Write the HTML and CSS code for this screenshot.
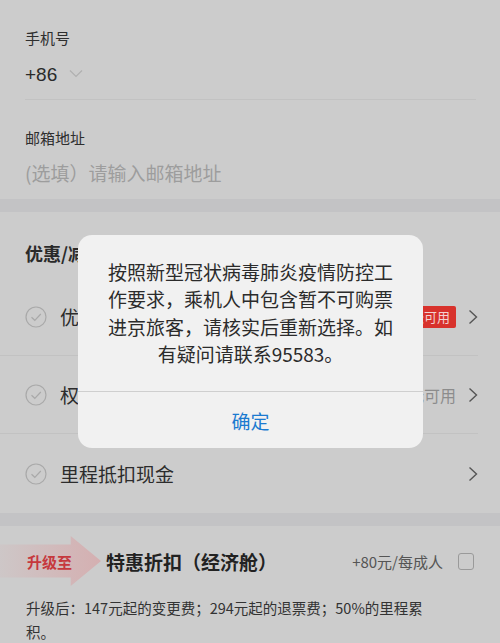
FILE: index.html
```html
<!DOCTYPE html>
<html lang="zh">
<head>
<meta charset="utf-8">
<link rel="stylesheet" href="styles.css">
</head>
<body>
<div class="page">
  <section class="card contact">
    <div class="field first">
      <div class="label">手机号</div>
      <div class="value">+86
        <svg class="down" width="14" height="9" viewBox="0 0 14 9"><polyline points="1,1.5 7,7.5 13,1.5" fill="none" stroke="#b0b0b0" stroke-width="1.2"/></svg>
      </div>
    </div>
    <div class="field second">
      <div class="label">邮箱地址</div>
      <div class="value placeholder">(选填）请输入邮箱地址</div>
    </div>
  </section>
  <div class="strip"></div>
  <section class="card offers">
    <h2 class="title">优惠/减免</h2>
    <div class="row">
      <svg class="check" width="22" height="22" viewBox="0 0 22 22"><circle cx="11" cy="11" r="10" fill="none" stroke="#a9a9a9" stroke-width="1.2"/><polyline points="6.5,11.2 9.8,14.3 15.8,8" fill="none" stroke="#a9a9a9" stroke-width="1.2"/></svg>
      <span class="name">优惠券</span>
      <span class="badge">2张可用</span>
      <svg class="chev" width="10" height="16" viewBox="0 0 10 16"><polyline points="1.5,1.5 8.5,8 1.5,14.5" fill="none" stroke="#555" stroke-width="1.4"/></svg>
    </div>
    <div class="row">
      <svg class="check" width="22" height="22" viewBox="0 0 22 22"><circle cx="11" cy="11" r="10" fill="none" stroke="#a9a9a9" stroke-width="1.2"/><polyline points="6.5,11.2 9.8,14.3 15.8,8" fill="none" stroke="#a9a9a9" stroke-width="1.2"/></svg>
      <span class="name">权益券</span>
      <span class="muted">暂无可用</span>
      <svg class="chev" width="10" height="16" viewBox="0 0 10 16"><polyline points="1.5,1.5 8.5,8 1.5,14.5" fill="none" stroke="#555" stroke-width="1.4"/></svg>
    </div>
    <div class="row last">
      <svg class="check" width="22" height="22" viewBox="0 0 22 22"><circle cx="11" cy="11" r="10" fill="none" stroke="#a9a9a9" stroke-width="1.2"/><polyline points="6.5,11.2 9.8,14.3 15.8,8" fill="none" stroke="#a9a9a9" stroke-width="1.2"/></svg>
      <span class="name">里程抵扣现金</span>
      <span class="spacer"></span>
      <svg class="chev" width="10" height="16" viewBox="0 0 10 16"><polyline points="1.5,1.5 8.5,8 1.5,14.5" fill="none" stroke="#555" stroke-width="1.4"/></svg>
    </div>
  </section>
  <div class="strip"></div>
  <section class="card upgrade">
    <div class="up-row">
      <div class="tag"><span class="arrow"></span><span class="tag-text">升级至</span></div>
      <span class="cabin">特惠折扣（经济舱）</span>
      <span class="price">+80元/每成人</span>
      <span class="box"></span>
    </div>
    <p class="desc">升级后：147元起的变更费；294元起的退票费；50%的里程累<br>积。</p>
  </section>

  <div class="alert">
    <div class="alert-msg">按照新型冠状病毒肺炎疫情防控工<br>作要求，乘机人中包含暂不可购票<br>进京旅客，请核实后重新选择。如<br>有疑问请联系95583。</div>
    <div class="alert-btn">确定</div>
  </div>
</div>
</body>
</html>
```

FILE: styles.css
```css
* { box-sizing: border-box; }
html, body {
  margin: 0;
  padding: 0;
  background: #cccccc;
  font-family: "Noto Sans CJK SC", "Noto Sans", sans-serif;
  color: #2c2c2c;
}
.page {
  position: relative;
  width: 500px;
  height: 643px;
  overflow: hidden;
}
.card { background: #cccccc; }
.strip { height: 13px; background: #c3c3c5; }

.contact { padding-left: 25px; padding-right: 24px; }
.field { display: flex; flex-direction: column; }
.field.first {
  height: 100px;
  padding-top: 28px;
  border-bottom: 1px solid #c2c2c2;
}
.field.second { height: 99px; padding-top: 28px; }
.label { font-size: 15px; line-height: 20px; color: #2e2e2e; }
.value {
  display: flex;
  align-items: center;
  gap: 12px;
  font-size: 19px;
  line-height: 30px;
  margin-top: 12px;
  color: #2a2a2a;
  font-family: "Liberation Sans", "Noto Sans CJK SC", sans-serif;
}
.second .value { margin-top: 10px; }
.value .down { margin-top: -4px; }
.placeholder { color: #9d9d9d; font-family: "Noto Sans CJK SC", sans-serif; }

.title {
  margin: 0;
  padding: 29px 0 13px 25px;
  font-size: 18px;
  line-height: 24px;
  font-weight: 700;
  color: #2a2a2a;
}
.row {
  display: flex;
  align-items: center;
  height: 78px;
  margin-right: 22px;
  padding-left: 25px;
  border-bottom: 1px solid #c2c2c2;
}
.row.last { border-bottom: none; height: 79px; }
.check { flex: none; }
.name { margin-left: 13px; font-size: 19px; color: #2c2c2c; flex: 1; }
.spacer { flex: 1; }
.badge {
  background: #d8322c;
  color: #f3d3d1;
  font-size: 13px;
  line-height: 22px;
  padding: 0 6px;
  border-radius: 2px;
}
.muted { color: #8c8c8c; font-size: 16px; }
.chev { margin-left: 12px; flex: none; }

.upgrade { padding-bottom: 10px; }
.up-row {
  display: flex;
  align-items: center;
  height: 70px;
  padding-right: 26px;
}
.tag {
  position: relative;
  width: 106px;
  height: 70px;
  display: flex;
  align-items: center;
  flex: none;
}
.arrow {
  position: absolute;
  left: 0;
  top: 10px;
  width: 101px;
  height: 50px;
  background: linear-gradient(90deg, rgba(214,170,172,0.15), rgba(214,170,172,0.85));
  clip-path: polygon(0 17%, 70% 17%, 70% 0, 100% 50%, 70% 100%, 70% 83%, 0 83%);
}
.tag-text {
  position: relative;
  margin-left: 27px;
  font-size: 15px;
  font-weight: 700;
  color: #c6383d;
}
.cabin { font-size: 19px; font-weight: 700; color: #222; flex: 1; }
.price { font-size: 15px; color: #555; }
.box {
  width: 16px;
  height: 17px;
  margin-left: 15px;
  border: 1.3px solid #9a9a9a;
  border-radius: 3px;
}
.desc {
  margin: 0 0 0 26px;
  font-size: 14.5px;
  line-height: 24px;
  color: #333;
}

.alert {
  position: absolute;
  left: 78px;
  top: 235px;
  width: 345px;
  height: 213px;
  background: #f1f1f1;
  border-radius: 14px;
  display: flex;
  flex-direction: column;
  overflow: hidden;
}
.alert-msg {
  height: 157px;
  padding-top: 23px;
  text-align: center;
  font-size: 19px;
  line-height: 27.3px;
  color: #2b2b2b;
  border-bottom: 1px solid #cfcfcf;
}
.alert-btn {
  flex: 1;
  display: flex;
  align-items: center;
  justify-content: center;
  font-size: 19px;
  color: #1b7ad0;
}
```
